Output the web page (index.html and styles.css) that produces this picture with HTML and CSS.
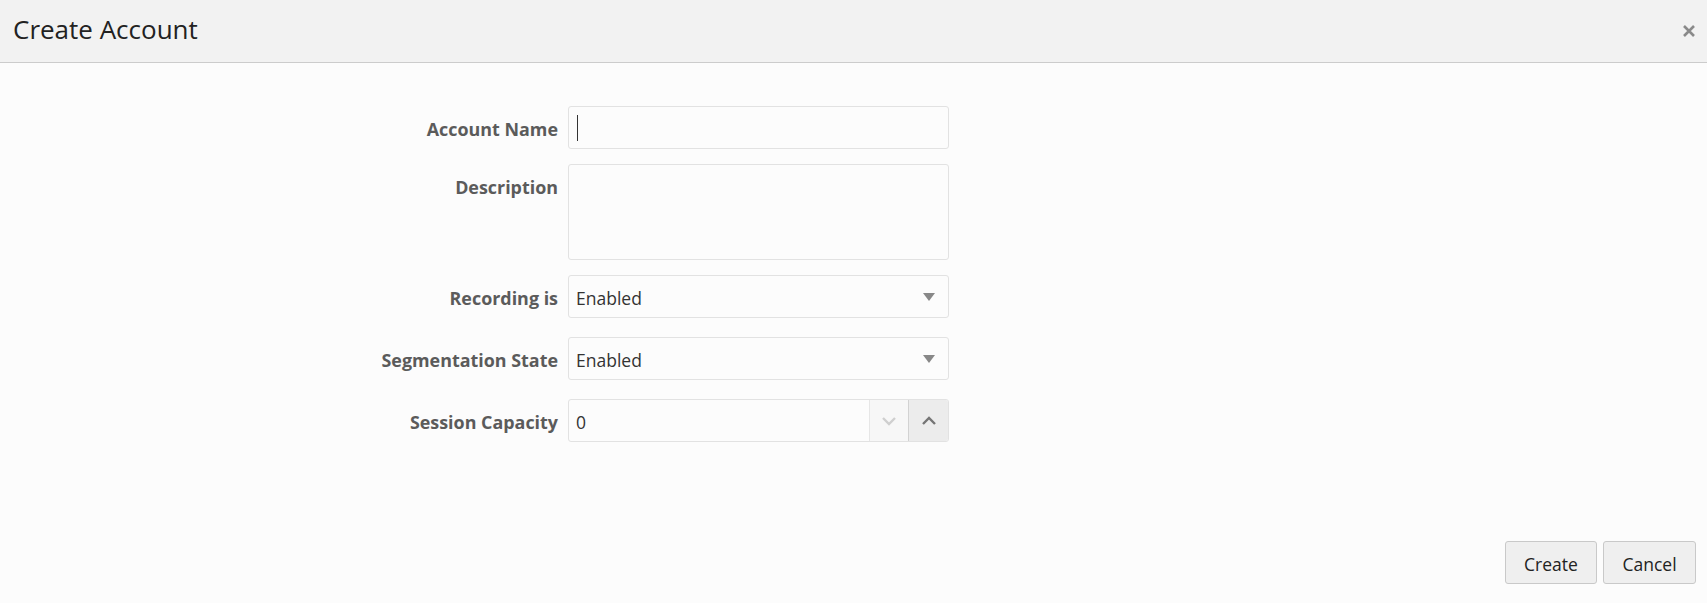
FILE: index.html
```html
<!DOCTYPE html>
<html lang="en">
<head>
<meta charset="utf-8">
<title>Create Account</title>
<link rel="stylesheet" href="styles.css">
</head>
<body>
<div class="dialog">
  <header class="dlg-header">
    <h1 class="dlg-title">Create Account</h1>
    <button class="dlg-close" aria-label="Close">
      <svg width="14" height="14" viewBox="0 0 14 14"><path d="M2 2 L12 12 M12 2 L2 12" stroke="#8a8a8a" stroke-width="2.6" stroke-linecap="butt" fill="none"/></svg>
    </button>
  </header>
  <main class="dlg-body">
    <div class="form">
      <label class="lbl">Account Name</label>
      <div class="field text"><span class="caret"></span></div>

      <label class="lbl">Description</label>
      <div class="field area"></div>

      <label class="lbl">Recording is</label>
      <div class="field select"><span class="val">Enabled</span><span class="tri"></span></div>

      <label class="lbl lower">Segmentation State</label>
      <div class="field select lower"><span class="val">Enabled</span><span class="tri"></span></div>

      <label class="lbl lower">Session Capacity</label>
      <div class="field spin lower">
        <span class="val">0</span>
        <span class="spin-btn down"><svg width="16" height="10" viewBox="0 0 16 10"><path d="M2 2 L8 8 L14 2" stroke="#cfcfcf" stroke-width="2.4" fill="none"/></svg></span>
        <span class="spin-btn up"><svg width="16" height="10" viewBox="0 0 16 10"><path d="M2 8 L8 2 L14 8" stroke="#757575" stroke-width="2.4" fill="none"/></svg></span>
      </div>
    </div>
  </main>
  <footer class="dlg-footer">
    <button class="btn btn-create">Create</button>
    <button class="btn btn-cancel">Cancel</button>
  </footer>
</div>
</body>
</html>
```
FILE: styles.css
```css
html, body {
  margin: 0;
  padding: 0;
  height: 100%;
}
body {
  background: #fcfcfc;
  font-family: "Open Sans", "Noto Sans", sans-serif;
  color: #333;
}
.dialog {
  display: flex;
  flex-direction: column;
  height: 100vh;
}
.dlg-header {
  height: 62px;
  background: #f2f2f2;
  border-bottom: 1px solid #cccccc;
  display: flex;
  align-items: flex-start;
  justify-content: space-between;
  padding: 0 11px 0 13px;
}
.dlg-title {
  margin: 0;
  font-size: 26px;
  font-weight: 400;
  line-height: 58px;
  color: #222;
}
.dlg-close {
  margin-top: 24px;
  border: 0;
  background: transparent;
  padding: 0;
  width: 14px;
  height: 14px;
  display: flex;
  cursor: pointer;
}
.dlg-body {
  flex: 1;
}
.form {
  display: grid;
  grid-template-columns: 558px 381px;
  column-gap: 10px;
  row-gap: 15px;
  margin-top: 43px;
  align-items: start;
}
.lbl {
  text-align: right;
  font-weight: 700;
  font-size: 17.9px;
  line-height: 39px;
  padding-top: 4px;
  color: #5b5b5b;
  white-space: nowrap;
}
.lower {
  margin-top: 4px;
}
.field {
  box-sizing: border-box;
  height: 43px;
  border: 1px solid #e2e2e2;
  border-radius: 3px;
  background: #fcfcfc;
  display: flex;
  align-items: center;
  font-size: 17.5px;
  color: #333;
}
.field.text {
  padding-left: 8px;
}
.caret {
  display: block;
  width: 1px;
  height: 26px;
  background: #333;
}
.field.area {
  height: 96px;
}
.field.select,
.field.spin {
  padding-left: 7px;
}
.val {
  flex: 1;
  line-height: 38px;
  padding-top: 3px;
}
.tri {
  width: 0;
  height: 0;
  border-left: 6.5px solid transparent;
  border-right: 6.5px solid transparent;
  border-top: 8px solid #888;
  margin-right: 13px;
}
.field.spin {
  overflow: hidden;
}
.spin-btn {
  display: flex;
  align-items: center;
  justify-content: center;
  height: 100%;
  box-sizing: border-box;
}
.spin-btn.down {
  width: 39px;
  background: #f7f7f7;
  border-left: 1px solid #e6e6e6;
}
.spin-btn.up {
  width: 40px;
  background: #ececec;
  border-left: 1px solid #d2d2d2;
}
.dlg-footer {
  display: flex;
  justify-content: flex-end;
  gap: 6px;
  padding: 0 11px 19px 0;
}
.btn {
  box-sizing: border-box;
  height: 43px;
  border: 1px solid #c9c9c9;
  border-radius: 3px;
  background: #efefef;
  font-family: "Open Sans", "Noto Sans", sans-serif;
  font-size: 17.5px;
  color: #222;
  padding: 2px 0 0;
  cursor: pointer;
}
.btn-create {
  width: 92px;
}
.btn-cancel {
  width: 93px;
}
```
